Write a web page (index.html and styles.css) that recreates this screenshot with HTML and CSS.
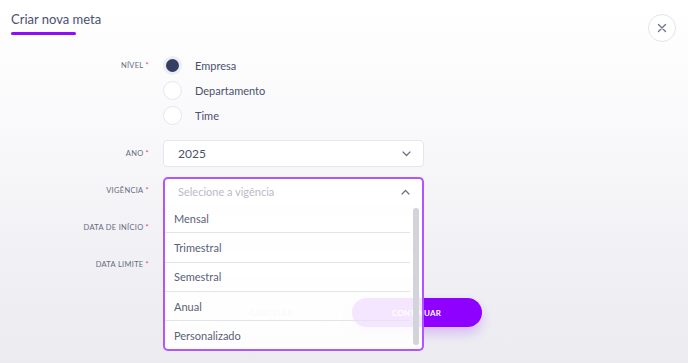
FILE: index.html
```html
<!DOCTYPE html>
<html lang="pt-BR">
<head>
    <meta charset="UTF-8">
    <title>Criar nova meta</title>
    <link rel="stylesheet" href="styles.css">
</head>
<body>
    <div class="modal">
        <!-- Header with tab title and close button -->
        <header class="modal-head">
            <div class="tab">Criar nova meta</div>
            <button class="close-btn" type="button">
                <svg width="10" height="10" viewBox="0 0 10 10">
                    <path d="M1.5 1.5 L8.5 8.5 M8.5 1.5 L1.5 8.5" stroke="#6b6f8a" stroke-width="1.3" stroke-linecap="round"/>
                </svg>
            </button>
        </header>

        <form class="goal-form">
            <div class="row row-top">
                <label class="lbl">Nível<span class="req">*</span></label>
                <div class="radios">
                    <div class="radio checked"><span class="dot"></span>Empresa</div>
                    <div class="radio"><span class="dot"></span>Departamento</div>
                    <div class="radio"><span class="dot"></span>Time</div>
                </div>
            </div>

            <div class="row">
                <label class="lbl">Ano<span class="req">*</span></label>
                <div class="select">
                    <span class="value">2025</span>
                    <svg class="chev" width="9" height="6" viewBox="0 0 9 6"><path d="M1 1 L4.5 4.5 L8 1" fill="none" stroke="#6b6f85" stroke-width="1.2" stroke-linecap="round" stroke-linejoin="round"/></svg>
                </div>
            </div>

            <div class="row">
                <label class="lbl">Vigência<span class="req">*</span></label>
                <div class="select open">
                    <span class="placeholder">Selecione a vigência</span>
                    <svg class="chev" width="9" height="6" viewBox="0 0 9 6"><path d="M1 5 L4.5 1.5 L8 5" fill="none" stroke="#6b6f85" stroke-width="1.2" stroke-linecap="round" stroke-linejoin="round"/></svg>

                    <!-- Open dropdown list -->
                    <div class="menu">
                        <div class="item">Mensal</div>
                        <div class="item">Trimestral</div>
                        <div class="item">Semestral</div>
                        <div class="item">Anual</div>
                        <div class="item">Personalizado</div>
                        <span class="scrollbar"></span>
                    </div>
                </div>
            </div>

            <div class="row">
                <label class="lbl">Data de início<span class="req">*</span></label>
                <div class="select"></div>
            </div>

            <div class="row">
                <label class="lbl">Data limite<span class="req">*</span></label>
                <div class="select"></div>
            </div>
        </form>

        <div class="actions">
            <button class="btn btn-ghost" type="button">Cancelar</button>
            <button class="btn btn-primary" type="button">Continuar</button>
        </div>
    </div>
</body>
</html>
```

FILE: styles.css
```css
* {
    box-sizing: border-box;
}

body {
    margin: 0;
    height: 363px;
    overflow: hidden;
    background: linear-gradient(180deg, #ffffff 0%, #f9f9fb 35%, #f1f1f5 70%, #ebebf0 100%);
    font-family: Lato, 'Open Sans', sans-serif;
    color: #4b5070;
}

.modal {
    display: flex;
    flex-direction: column;
    height: 100%;
}

/* Header */
.modal-head {
    display: flex;
    justify-content: space-between;
    align-items: flex-start;
    padding: 14px 12px 0 11px;
    height: 53px;
}

.tab {
    font-size: 13px;
    line-height: 16px;
    color: #4b5070;
    margin-top: -3px;
    width: 65px;
    white-space: nowrap;
}

.tab::after {
    content: '';
    display: block;
    width: 65px;
    height: 3px;
    margin-top: 5px;
    border-radius: 2px;
    background: #8e0dff;
}

.close-btn {
    width: 28px;
    height: 28px;
    border-radius: 50%;
    border: 1px solid #e4e4ec;
    background: #fff;
    display: flex;
    align-items: center;
    justify-content: center;
    padding: 0;
}

/* Form */
.goal-form {
    display: flex;
    flex-direction: column;
    gap: 10px;
}

.row {
    display: grid;
    grid-template-columns: 149px 261px;
    column-gap: 14px;
    align-items: center;
}

.row-top {
    align-items: start;
    margin-bottom: 2px;
}

.lbl {
    text-align: right;
    font-size: 7.5px;
    letter-spacing: 0.3px;
    text-transform: uppercase;
    color: #656a80;
    line-height: 25px;
}

.req {
    color: #f0386b;
    margin-left: 2px;
}

.radios {
    display: flex;
    flex-direction: column;
}

.radio {
    display: flex;
    align-items: center;
    height: 25px;
    font-size: 11px;
    color: #4b5070;
}

.dot {
    width: 19px;
    height: 19px;
    border-radius: 50%;
    border: 1px solid #e6e6ee;
    background: #fff;
    margin-right: 13px;
}

.radio.checked .dot {
    background: #363d63;
    border: 3px solid #eceef4;
}

.select {
    position: relative;
    height: 27px;
    border: 1px solid #e6e6ee;
    border-radius: 4px;
    background: #fff;
    display: flex;
    align-items: center;
    justify-content: space-between;
    padding: 0 12px 0 14px;
    font-size: 11px;
}

.value {
    font-size: 12px;
    color: #4b5070;
}

.placeholder {
    color: #b9bbc9;
}

.select.open {
    border: 2px solid #b055ff;
    border-bottom: none;
    border-radius: 5px 5px 0 0;
    padding-left: 13px;
    z-index: 2;
}

/* Dropdown menu over the rest of the form */
.menu {
    position: absolute;
    top: 100%;
    left: -2px;
    right: -2px;
    border: 2px solid #b055ff;
    border-top: none;
    border-radius: 0 0 5px 5px;
    background: rgba(255, 255, 255, 0.9);
    padding: 0 12px 0 0;
    height: 147px;
}

.item {
    height: 29.3px;
    display: flex;
    align-items: center;
    padding-left: 9px;
    font-size: 11px;
    color: #5a5f78;
    border-bottom: 1px solid #e3e3ea;
}

.item:last-of-type {
    border-bottom: none;
}

.scrollbar {
    position: absolute;
    right: 3px;
    top: 4px;
    bottom: 4px;
    width: 6px;
    border-radius: 3px;
    background: #d3d4d9;
}

/* Buttons */
.actions {
    display: flex;
    justify-content: center;
    gap: 15px;
    margin-top: 20px;
}

.btn {
    width: 130px;
    height: 29px;
    border-radius: 15px;
    font-family: Lato, sans-serif;
    font-size: 8px;
    font-weight: 700;
    text-transform: uppercase;
    letter-spacing: 0.2px;
}

.btn-ghost {
    background: transparent;
    border: 1px solid #e8e8ee;
    color: #c8c9d3;
}

.btn-primary {
    background: #8e00ff;
    border: none;
    color: #fff;
    box-shadow: 0 6px 12px rgba(142, 0, 255, 0.22);
}
```
